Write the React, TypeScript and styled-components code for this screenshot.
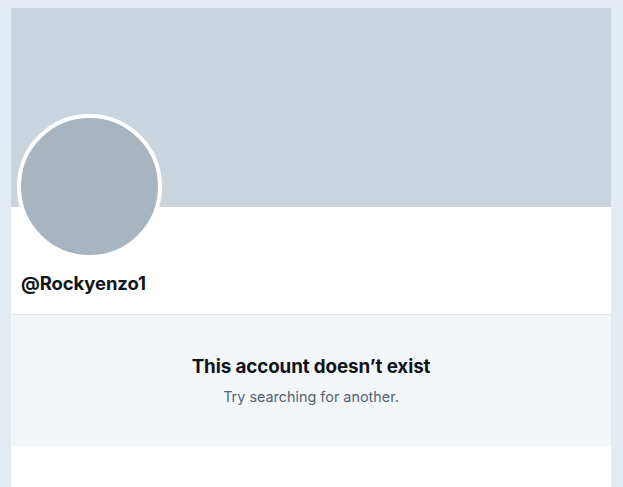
import React from "react";
import styled, { createGlobalStyle } from "styled-components";

const Global = createGlobalStyle`
  html, body { margin: 0; padding: 0; background: #e5ebf2; }
  body { font-family: Inter, "Liberation Sans", sans-serif; -webkit-font-smoothing: antialiased; }
`;

const Page = styled.div`
  height: 487px;
  padding: 8px 12px 0 11px;
  box-sizing: border-box;
  overflow: hidden;
`;

const Card = styled.div`
  background: #ffffff;
  height: 100%;
  display: flex;
  flex-direction: column;
`;

const Banner = styled.div`
  height: 199px;
  background: #c9d5de;
  flex-shrink: 0;
`;

const ProfileArea = styled.div`
  position: relative;
  height: 107px;
  border-bottom: 1px solid #dde3e8;
  padding: 0 10px;
  display: flex;
  align-items: flex-end;
`;

const Avatar = styled.div`
  position: absolute;
  left: 6px;
  top: -93px;
  width: 137px;
  height: 137px;
  border-radius: 50%;
  background: #a6b5bf;
  border: 4px solid #ffffff;
`;

const Handle = styled.div`
  font-size: 18.5px;
  font-weight: 700;
  color: #0f1419;
  letter-spacing: -0.1px;
  padding-bottom: 20px;
`;

const Notice = styled.div`
  height: 131px;
  background: #f3f6f9;
  display: flex;
  flex-direction: column;
  align-items: center;
  padding-top: 40px;
  box-sizing: border-box;
`;

const Title = styled.div`
  font-size: 18.8px;
  font-weight: 700;
  color: #0f1419;
  letter-spacing: -0.1px;
`;

const Sub = styled.div`
  margin-top: 10px;
  font-size: 14.4px;
  color: #536471;
`;

export default function App() {
  return (
    <>
      <Global />
      <Page>
        <Card>
          <Banner />
          <ProfileArea>
            <Avatar />
            <Handle>@Rockyenzo1</Handle>
          </ProfileArea>
          <Notice>
            <Title>This account doesn’t exist</Title>
            <Sub>Try searching for another.</Sub>
          </Notice>
        </Card>
      </Page>
    </>
  );
}
